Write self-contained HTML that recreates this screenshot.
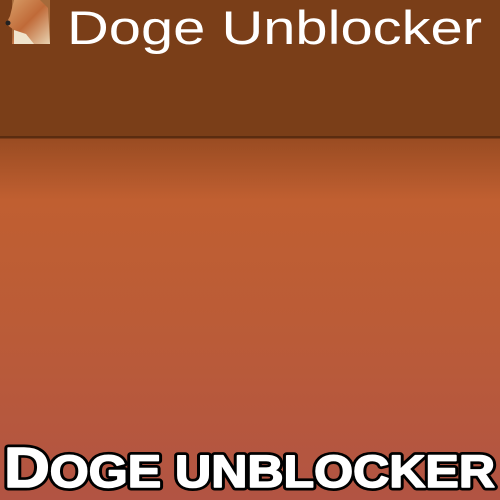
<!DOCTYPE html>
<html><head><meta charset="utf-8"><style>
html,body{margin:0;padding:0;width:500px;height:500px;overflow:hidden}
body{background:linear-gradient(to bottom,#7a3e18 0,#7a3e18 136px,#5a2c10 136px,#5a2c10 138px,#9a4c22 139px,#c05f31 200px,#bb5c37 320px,#b25443 500px);position:relative;font-family:"Liberation Sans",sans-serif}
svg{position:absolute;left:0;top:0}
</style></head><body>
<svg width="500" height="500" viewBox="0 0 500 500">
  <defs><linearGradient id="d" x1="0" y1="0" x2="1" y2="1"><stop offset="0" stop-color="#d9a06a"/><stop offset="0.5" stop-color="#c06a38"/><stop offset="1" stop-color="#e8d2b0"/></linearGradient></defs>
  <rect x="12" y="0" width="38" height="44" fill="#a56a3a"/>
  <path d="M14 0 L40 0 L48 8 L50 44 L12 44 L14 30 L6 24 L10 16 Z" fill="url(#d)"/>
  <path d="M14 30 L26 34 L34 44 L14 44 Z" fill="#f0e4cc"/>
  <circle cx="8" cy="23" r="2.5" fill="#222"/>
  <text x="67" y="44" font-family="Liberation Sans, sans-serif" font-size="47" fill="#fff" textLength="415" lengthAdjust="spacingAndGlyphs">Doge Unblocker</text>
  <text x="4" y="487" font-family="Liberation Sans, sans-serif" font-weight="bold" fill="#000" stroke="#000" stroke-width="7" stroke-linejoin="round" textLength="491" lengthAdjust="spacingAndGlyphs"><tspan font-size="57">D</tspan><tspan font-size="45">OGE UNBLOCKER</tspan></text>
  <text x="4" y="487" font-family="Liberation Sans, sans-serif" font-weight="bold" fill="#fff" stroke="#fff" stroke-width="1.6" stroke-linejoin="round" textLength="491" lengthAdjust="spacingAndGlyphs"><tspan font-size="57">D</tspan><tspan font-size="45">OGE UNBLOCKER</tspan></text>
</svg>
</body></html>
